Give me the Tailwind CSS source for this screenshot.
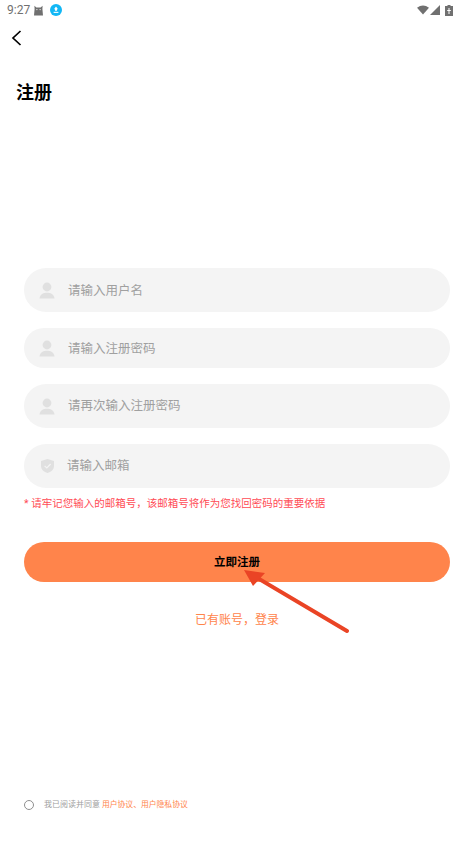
<!DOCTYPE html>
<html lang="zh">
<head>
  <meta charset="UTF-8" />
  <title>注册</title>
  <script src="https://cdn.jsdelivr.net/npm/@tailwindcss/browser@4"></script>
</head>
<body class="bg-white font-['Roboto','Noto_Sans_CJK_SC',sans-serif]">
  <div class="relative w-[474px] h-[843px] overflow-hidden">

    <!-- status bar -->
    <div class="h-5 flex items-center pl-[7px] pr-[21px] text-[#707070]">
      <span class="text-[12px] leading-5 w-[22px]">9:27</span>
      <svg class="ml-[4px] w-[11px] h-[11px]" viewBox="0 0 11 11" fill="#707070"><path d="M1 10.5 L1.6 4 L1.4 .8 L3.4 2.6 L7.6 2.6 L9.6 .8 L9.4 4 L10 10.5 Z"/><circle cx="3.9" cy="4.6" r=".6" fill="#fff"/><circle cx="7.1" cy="4.6" r=".6" fill="#fff"/></svg>
      <div class="ml-[6px] w-3 h-3 rounded-full bg-[#12b7f5] flex items-center justify-center">
        <svg class="w-2 h-2" viewBox="0 0 8 8" fill="#fff"><path d="M4 0.5 L6 3.2 L5 3.2 L5 4.8 L3 4.8 L3 3.2 L2 3.2 Z"/><rect x="1.6" y="5.8" width="4.8" height="1.1"/></svg>
      </div>
      <div class="ml-auto flex items-center">
        <svg class="w-[12px] h-[10px]" viewBox="0 0 12 10" fill="#707070"><path d="M0 2.8 Q6 -1.6 12 2.8 L6 9.5 Z"/></svg>
        <svg class="ml-[1px] w-[10px] h-[10px]" viewBox="0 0 10 10" fill="#707070"><path d="M0 10 L10 0 L10 10 Z"/></svg>
        <svg class="ml-[5px] w-[8px] h-[11px]" viewBox="0 0 8 11" fill="#707070"><path d="M2.5 0 H5.5 V1 H8 V11 H0 V1 H2.5 Z"/><path d="M3.5 3 H4.5 V5 H5.8 V6 H4.5 V9 H3.5 V6 H2.2 V5 H3.5 Z" fill="#fff"/></svg>
      </div>
    </div>

    <!-- back -->
    <div class="h-[36px] pl-[11px] flex items-center">
      <svg class="w-[12px] h-[16px]" viewBox="0 0 12 16" fill="none" stroke="#000" stroke-width="1.7"><path d="M9.5 1 L2 8 L9.5 15"/></svg>
    </div>

    <h1 class="mt-[23px] pl-4 text-[18px] leading-[28px] font-bold text-black">注册</h1>

    <!-- form -->
    <div class="mt-[161px] mx-6">
      <div class="h-11 rounded-[22px] bg-[#f4f4f4] flex items-center pl-[15px]">
        <svg class="w-[16px] h-[17px]" viewBox="0 0 16 17" fill="#e0e0e0"><circle cx="8" cy="5" r="4.4"/><path d="M0.5 16.5 C1 12 4.5 10.8 8 10.8 C11.5 10.8 15 12 15.5 16.5 Z"/></svg>
        <span class="ml-[13px] pt-[2px] text-[12.5px] text-[#a0a0a0]">请输入用户名</span>
      </div>
      <div class="mt-4 h-10 rounded-[20px] bg-[#f4f4f4] flex items-center pl-[15px]">
        <svg class="w-[16px] h-[17px]" viewBox="0 0 16 17" fill="#e0e0e0"><circle cx="8" cy="5" r="4.4"/><path d="M0.5 16.5 C1 12 4.5 10.8 8 10.8 C11.5 10.8 15 12 15.5 16.5 Z"/></svg>
        <span class="ml-[13px] pt-[2px] text-[12.5px] text-[#a0a0a0]">请输入注册密码</span>
      </div>
      <div class="mt-4 h-11 rounded-[22px] bg-[#f4f4f4] flex items-center pl-[15px]">
        <svg class="w-[16px] h-[17px]" viewBox="0 0 16 17" fill="#e0e0e0"><circle cx="8" cy="5" r="4.4"/><path d="M0.5 16.5 C1 12 4.5 10.8 8 10.8 C11.5 10.8 15 12 15.5 16.5 Z"/></svg>
        <span class="ml-[13px] text-[12.5px] text-[#a0a0a0]">请再次输入注册密码</span>
      </div>
      <div class="mt-4 h-11 rounded-[22px] bg-[#f4f4f4] flex items-center pl-[17px]">
        <svg class="w-[13px] h-[14px]" viewBox="0 0 13 14"><path d="M6.5 0 L13 2 V7 C13 10.5 10 13 6.5 14 C3 13 0 10.5 0 7 V2 Z" fill="#e0e0e0"/><path d="M3.6 6.8 L5.8 9 L9.6 5" fill="none" stroke="#f4f4f4" stroke-width="1.2"/></svg>
        <span class="ml-[13px] text-[12.5px] text-[#a0a0a0]">请输入邮箱</span>
      </div>
      <p class="mt-2 text-[10.5px] leading-4 text-[#ff4b55]">* 请牢记您输入的邮箱号，该邮箱号将作为您找回密码的重要依据</p>
      <div class="mt-[30px] h-10 pt-[2px] rounded-[20px] bg-[#ff844b] flex items-center justify-center text-[11.5px] font-bold text-black">立即注册</div>
      <p class="mt-[28px] text-center text-[12px] leading-[20px] text-[#ff844b]">已有账号，登录</p>
    </div>

    <!-- agreement -->
    <div class="absolute left-6 top-[799px] flex items-center">
      <div class="w-[10px] h-[10px] rounded-full border border-[#8f8f8f]"></div>
      <p class="ml-[10px] pt-px text-[8px] leading-[10px] text-[#a0a0a0]">我已阅读并同意 <span class="text-[7.8px] text-[#ff844b]">用户协议、用户隐私协议</span></p>
    </div>

    <!-- annotation arrow -->
    <svg class="absolute left-0 top-0 pointer-events-none" width="474" height="843" viewBox="0 0 474 843">
      <path d="M347 631 L254 576" stroke="#ea4425" stroke-width="4" stroke-linecap="round" fill="none"/>
      <path d="M244 570 L265 573 L253 586 Z" fill="#ea4425"/>
    </svg>
  </div>
</body>
</html>
